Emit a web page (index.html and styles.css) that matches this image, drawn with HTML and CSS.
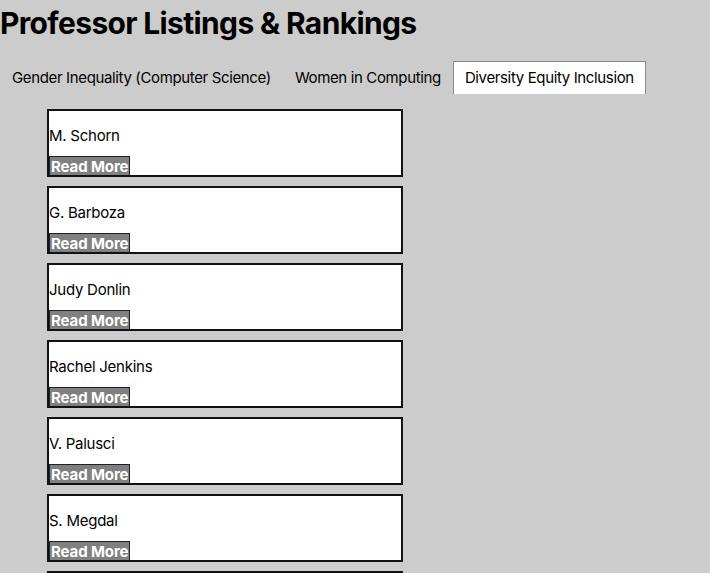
FILE: index.html
```html
<!DOCTYPE html>
<html lang="en">
<head>
<meta charset="utf-8">
<title>Professor Listings &amp; Rankings</title>
<link rel="stylesheet" href="styles.css">
</head>
<body>
<h1 class="title">Professor Listings &amp; Rankings</h1>
<nav class="tabs">
  <div class="tab">Gender Inequality (Computer Science)</div>
  <div class="tab">Women in Computing</div>
  <div class="tab tab-active">Diversity Equity Inclusion</div>
</nav>
<main class="list">
  <div class="card"><div class="name">M. Schorn</div><button class="more">Read More</button></div>
  <div class="card"><div class="name">G. Barboza</div><button class="more">Read More</button></div>
  <div class="card"><div class="name">Judy Donlin</div><button class="more">Read More</button></div>
  <div class="card"><div class="name">Rachel Jenkins</div><button class="more">Read More</button></div>
  <div class="card"><div class="name">V. Palusci</div><button class="more">Read More</button></div>
  <div class="card"><div class="name">S. Megdal</div><button class="more">Read More</button></div>
  <div class="card"><div class="name">A. Lee</div><button class="more">Read More</button></div>
</main>
</body>
</html>
```
FILE: styles.css
```css
html, body {
  margin: 0;
  padding: 0;
  background: #cccccc;
}
body {
  font-family: Inter, "Liberation Sans", sans-serif;
  color: #000;
  height: 573px;
  overflow: hidden;
}
.title {
  margin: 0;
  padding-top: 5px;
  font-size: 30px;
  line-height: 36px;
  font-weight: 700;
  letter-spacing: -0.65px;
}
.tabs {
  display: flex;
  margin-top: 20px;
}
.tab {
  border: 1px solid transparent;
  border-bottom: none;
  padding: 6px 11px 7px;
  font-size: 15px;
  line-height: 19px;
  white-space: nowrap;
  letter-spacing: -0.36px;
}
.tab-active {
  background: #fff;
  border-color: #888;
}
.list {
  display: flex;
  flex-direction: column;
  gap: 9px;
  padding: 15px 0 0 47px;
}
.card {
  width: 352px;
  border: 2px solid #111;
  background: #fff;
  display: flex;
  flex-direction: column;
  align-items: flex-start;
  padding-top: 15px;
}
.name {
  font-size: 15px;
  line-height: 19px;
  margin-bottom: 11px;
  letter-spacing: -0.25px;
}
.more {
  margin: 0;
  font-family: Inter, "Liberation Sans", sans-serif;
  font-size: 15px;
  font-weight: 700;
  line-height: 17px;
  color: #fff;
  background: #808080;
  border: 1px solid #222;
  border-bottom: none;
  padding: 1px 1px 0 1px;
  border-radius: 0;
  letter-spacing: -0.1px;
}
```
